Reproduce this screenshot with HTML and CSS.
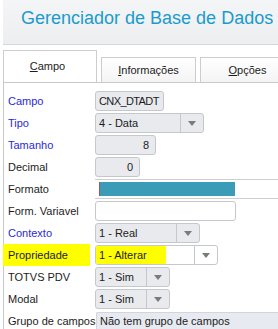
FILE: index.html
```html
<!DOCTYPE html>
<html lang="pt-BR">
<head>
    <meta charset="UTF-8">
    <meta name="viewport" content="width=device-width, initial-scale=1.0">
    <title>Gerenciador de Base de Dados</title>
    <link rel="stylesheet" href="styles.css">
</head>
<body>
    <header class="app-header">
        <h1>Gerenciador de Base de Dados</h1>
    </header>

    <nav class="tabs">
        <div class="tab active"><u>C</u>ampo</div>
        <div class="tab"><u>I</u>nformações</div>
        <div class="tab"><u>O</u>pções</div>
    </nav>

    <section class="panel">
        <div class="row">
            <span class="lbl blue">Campo</span>
            <div class="field w-campo">CNX_DTADT</div>
        </div>
        <div class="row">
            <span class="lbl blue">Tipo</span>
            <div class="select w-tipo">
                <span class="value">4 - Data</span>
                <span class="arrow"></span>
            </div>
        </div>
        <div class="row">
            <span class="lbl blue">Tamanho</span>
            <div class="field num w-tamanho">8</div>
        </div>
        <div class="row">
            <span class="lbl">Decimal</span>
            <div class="field num w-decimal">0</div>
        </div>
        <div class="row">
            <span class="lbl">Formato</span>
            <div class="formato"><span class="bar"></span></div>
        </div>
        <div class="row">
            <span class="lbl">Form. Variavel</span>
            <div class="field white w-variavel"></div>
        </div>
        <div class="row">
            <span class="lbl blue">Contexto</span>
            <div class="select w-contexto">
                <span class="value">1 - Real</span>
                <span class="arrow"></span>
            </div>
        </div>
        <div class="row">
            <span class="lbl marked">Propriedade</span>
            <div class="select white w-propriedade">
                <span class="value"><span class="hl">1 - Alterar</span></span>
                <span class="arrow"></span>
            </div>
        </div>
        <div class="row">
            <span class="lbl">TOTVS PDV</span>
            <div class="select w-sim">
                <span class="value">1 - Sim</span>
                <span class="arrow"></span>
            </div>
        </div>
        <div class="row">
            <span class="lbl">Modal</span>
            <div class="select w-sim">
                <span class="value">1 - Sim</span>
                <span class="arrow"></span>
            </div>
        </div>
        <div class="row">
            <span class="lbl">Grupo de campos</span>
            <div class="grupo">Não tem grupo de campos</div>
        </div>
    </section>
</body>
</html>
```

FILE: styles.css
```css
html {
    overflow: hidden;
}

body {
    margin: 0 0 0 3px;
    font-family: "Liberation Sans", Arial, sans-serif;
    font-size: 11px;
    color: #1c1c1c;
    background-color: #ffffff;
}

.app-header {
    height: 44px;
    background: linear-gradient(#f4f5f6, #eceef0);
    border-bottom: 1px solid #d6d7d9;
}

.app-header h1 {
    margin: 0;
    padding: 7px 0 0 18px;
    font-size: 18px;
    font-weight: normal;
    line-height: 22px;
    color: #1b9bcc;
}

.tabs {
    display: flex;
    align-items: flex-end;
    gap: 4px;
    height: 32px;
    margin-top: 5px;
}

.tab {
    box-sizing: border-box;
    width: 95px;
    height: 25px;
    line-height: 24px;
    text-align: center;
    border: 1px solid #cdcdcd;
    border-bottom: none;
    background: linear-gradient(#ffffff, #f4f4f4);
    white-space: nowrap;
    flex-shrink: 0;
}

.tab.active {
    width: 94px;
    height: 32px;
    line-height: 31px;
    padding-right: 5px;
    background: #ffffff;
}

.panel {
    border-top: 1px solid #c9c9c9;
    border-left: 1px solid #c9c9c9;
    padding-top: 7px;
}

.row {
    display: flex;
    align-items: center;
    height: 22px;
}

.lbl {
    box-sizing: border-box;
    width: 91px;
    padding-left: 4px;
    white-space: nowrap;
    flex-shrink: 0;
}

.lbl.blue {
    color: #2a2ad8;
}

.lbl.marked {
    width: 88px;
    height: 22px;
    line-height: 22px;
    margin-left: -2px;
    margin-right: 5px;
    padding-left: 6px;
    background-color: #ffff00;
}

.field,
.select {
    box-sizing: border-box;
    height: 20px;
    line-height: 18px;
    border: 1px solid #c4c7cc;
    border-radius: 3px;
    background-color: #e8eaee;
    white-space: nowrap;
    overflow: hidden;
    flex-shrink: 0;
}

.field {
    padding: 0 3px;
}

.field.num {
    text-align: right;
    padding-right: 6px;
}

.white {
    background-color: #ffffff;
}

.select {
    display: flex;
}

.select .value {
    flex: 1;
    padding-left: 3px;
}

.select .arrow {
    width: 22px;
    border-left: 1px solid #c4c7cc;
    display: flex;
    align-items: center;
    justify-content: center;
}

.select .arrow::after {
    content: "";
    border-left: 4px solid transparent;
    border-right: 4px solid transparent;
    border-top: 5px solid #7b7b7b;
}

.select .hl {
    display: inline-block;
    width: 67px;
    margin-left: -3px;
    padding-left: 3px;
    background-color: #ffff00;
}

.w-campo { width: 69px; letter-spacing: -0.6px; }
.w-tipo { width: 109px; }
.w-tamanho { width: 61px; }
.w-decimal { width: 45px; }
.w-variavel { width: 141px; }
.w-contexto { width: 105px; }
.w-propriedade { width: 123px; }
.w-sim { width: 75px; }

.formato {
    box-sizing: border-box;
    flex: 1;
    height: 20px;
    border-top: 1px solid #cfcfcf;
    border-bottom: 1px solid #cfcfcf;
    display: flex;
    align-items: center;
    padding-left: 4px;
}

.formato .bar {
    width: 135px;
    height: 14px;
    background-color: #3a9cb6;
    border-left: 1px solid #a2584c;
}

.grupo {
    box-sizing: border-box;
    flex: 1;
    height: 19px;
    line-height: 17px;
    margin-left: 1px;
    padding-left: 3px;
    border: 1px solid #d2d6dc;
    border-right: none;
    border-radius: 2px 0 0 2px;
    background-color: #e7eaf0;
    white-space: nowrap;
    overflow: hidden;
}
```
